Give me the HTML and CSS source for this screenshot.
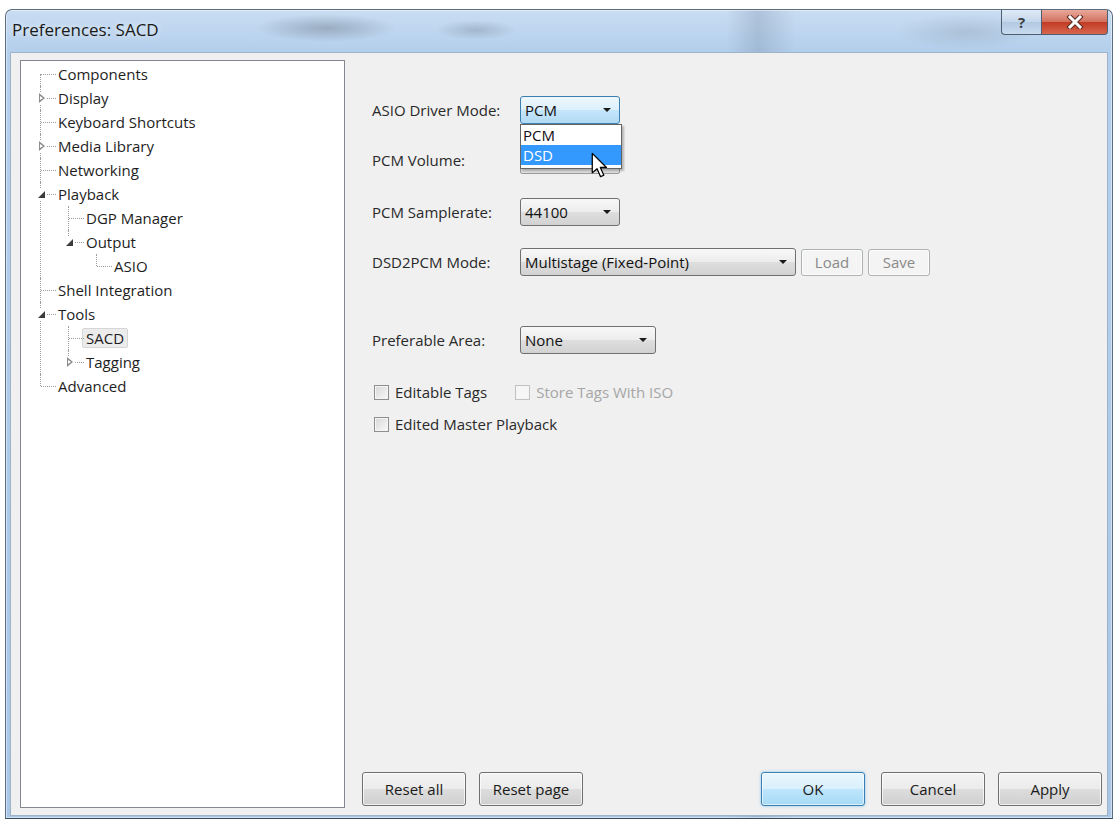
FILE: index.html
```html
<!DOCTYPE html>
<html lang="en">
<head>
    <meta charset="UTF-8">
    <meta name="viewport" content="width=device-width, initial-scale=1.0">
    <title>Preferences: SACD</title>
    <link rel="stylesheet" href="styles.css">
</head>
<body>
    <div class="window">
        <div class="titlebar">
            <span class="title">Preferences: SACD</span>
            <div class="caption">
                <span class="cap-help">?</span>
                <span class="cap-close">
                    <svg width="18" height="14" viewBox="0 0 18 14">
                        <path d="M4 2 L14 12 M14 2 L4 12" stroke="#5a2a22" stroke-width="5" stroke-linecap="square"/>
                        <path d="M4 2 L14 12 M14 2 L4 12" stroke="#fff" stroke-width="3" stroke-linecap="square"/>
                    </svg>
                </span>
            </div>
        </div>

        <div class="client">
            <!-- page tree -->
            <div class="tree">
                <ul>
                    <li><div class="item">Components</div></li>
                    <li><div class="item"><span class="exp closed"></span>Display</div></li>
                    <li><div class="item">Keyboard Shortcuts</div></li>
                    <li><div class="item"><span class="exp closed"></span>Media Library</div></li>
                    <li><div class="item">Networking</div></li>
                    <li>
                        <div class="item"><span class="exp open"></span>Playback</div>
                        <ul>
                            <li><div class="item">DGP Manager</div></li>
                            <li>
                                <div class="item"><span class="exp open"></span>Output</div>
                                <ul>
                                    <li><div class="item">ASIO</div></li>
                                </ul>
                            </li>
                        </ul>
                    </li>
                    <li><div class="item">Shell Integration</div></li>
                    <li>
                        <div class="item"><span class="exp open"></span>Tools</div>
                        <ul>
                            <li><div class="item sel"><span class="label">SACD</span></div></li>
                            <li><div class="item"><span class="exp closed"></span>Tagging</div></li>
                        </ul>
                    </li>
                    <li><div class="item">Advanced</div></li>
                </ul>
            </div>

            <!-- SACD settings page -->
            <div class="page">
                <div class="form">
                    <div class="row">
                        <label>ASIO Driver Mode:</label>
                        <div class="combo focus w100">
                            <span class="value">PCM</span>
                            <span class="arrow"></span>
                            <ul class="droplist">
                                <li>PCM</li>
                                <li class="hot">DSD</li>
                            </ul>
                            <svg class="pointer" width="17" height="26" viewBox="0 0 13.5 20.5">
                                <path d="M1 1 L1 16.5 L4.8 13.2 L7.6 19.5 L10.2 18.4 L7.4 12.2 L12.3 12.2 Z" fill="#fff" stroke="#000" stroke-width="1" stroke-linejoin="round"/>
                            </svg>
                        </div>
                    </div>
                    <div class="row r-volume">
                        <label>PCM Volume:</label>
                        <div class="slider"></div>
                    </div>
                    <div class="row r-rate">
                        <label>PCM Samplerate:</label>
                        <div class="combo w100">
                            <span class="value">44100</span>
                            <span class="arrow"></span>
                        </div>
                    </div>
                    <div class="row r-mode">
                        <label>DSD2PCM Mode:</label>
                        <div class="combo w276">
                            <span class="value">Multistage (Fixed-Point)</span>
                            <span class="arrow"></span>
                        </div>
                        <button class="btn small" disabled>Load</button>
                        <button class="btn small" disabled>Save</button>
                    </div>
                    <div class="row r-area">
                        <label>Preferable Area:</label>
                        <div class="combo w136">
                            <span class="value">None</span>
                            <span class="arrow"></span>
                        </div>
                    </div>
                    <div class="checks">
                        <span class="check"><span class="box"></span>Editable Tags</span>
                        <span class="check off"><span class="box"></span>Store Tags With ISO</span>
                    </div>
                    <div class="checks second">
                        <span class="check"><span class="box"></span>Edited Master Playback</span>
                    </div>
                </div>

                <div class="footer">
                    <button class="btn">Reset all</button>
                    <button class="btn">Reset page</button>
                    <span class="spacer"></span>
                    <button class="btn default">OK</button>
                    <button class="btn">Cancel</button>
                    <button class="btn">Apply</button>
                </div>
            </div>
        </div>
    </div>
</body>
</html>
```

FILE: styles.css
```css
body {
    margin: 0;
    background: #fff;
    font-family: "Open Sans", "Noto Sans", sans-serif;
    font-size: 15px;
    color: #1e1e1e;
    overflow: hidden;
}

/* window frame with aero glass title */
.window {
    margin: 9px 0 0 5px;
    width: 1108px;
    height: 810px;
    box-sizing: border-box;
    border: 1px solid #5b6d80;
    border-bottom-color: #3e4a57;
    border-radius: 7px 7px 0 0;
    display: flex;
    flex-direction: column;
    background:
        radial-gradient(ellipse 70px 14px at 320px 18px, rgba(80, 92, 108, .35), transparent),
        radial-gradient(ellipse 40px 10px at 470px 20px, rgba(80, 92, 108, .25), transparent),
        radial-gradient(ellipse 70px 18px at 960px 22px, rgba(120, 135, 150, .25), transparent),
        linear-gradient(to right, transparent 720px, rgba(110, 130, 155, .28) 752px, transparent 790px),
        linear-gradient(#c9ddf2, #b4cfec 40px, #a9c6e7);
    box-shadow: inset 0 0 0 1px rgba(255, 255, 255, .45);
}
.titlebar {
    height: 42px;
    display: flex;
    align-items: flex-start;
    padding-left: 6px;
}
.title {
    margin-top: 8px;
    font-size: 17px;
    color: #1a1a1a;
    text-shadow: 0 0 6px rgba(255, 255, 255, .9);
}
.caption {
    margin-left: auto;
    margin-right: 4px;
    display: flex;
}
.cap-help,
.cap-close {
    height: 24px;
    display: flex;
    align-items: center;
    justify-content: center;
    border: 1px solid #4e5e70;
    border-top: none;
}
.cap-help {
    width: 39px;
    border-radius: 0 0 0 4px;
    border-right: none;
    background: linear-gradient(#e0ebf6, #c3d6ea 50%, #b2c9e2 51%, #c8dbee);
    font-weight: bold;
    font-size: 15px;
    color: #3a3f46;
}
.cap-close {
    width: 65px;
    border-radius: 0 0 4px 0;
    background: linear-gradient(#e9a89b, #d3725f 48%, #c23c25 52%, #d8664e);
}

.client {
    flex: 1;
    margin: 0 4px 2px 4px;
    display: flex;
    background: #f0f0f0;
    border: 1px solid #9fb3c8;
    padding: 7px 0 7px 9px;
    min-height: 0;
}

/* tree view */
.tree {
    width: 325px;
    box-sizing: border-box;
    background: #fff;
    border: 1px solid #828790;
    padding-top: 1px;
}
.tree ul {
    list-style: none;
    margin: 0;
    padding: 0;
}
.tree ul ul {
    margin-left: 28px;
}
.tree li {
    position: relative;
}
.tree li::before {
    content: '';
    position: absolute;
    left: 19px;
    top: 0;
    bottom: 0;
    border-left: 1px dotted #9c9c9c;
}
.tree li:last-child::before {
    bottom: auto;
    height: 12px;
}
.tree > ul > li:first-child::before {
    top: 12px;
}
.tree > ul > li:last-child::before {
    top: 0;
}
.item {
    position: relative;
    height: 24px;
    line-height: 24px;
    padding-left: 37px;
    white-space: nowrap;
    color: #1e1e1e;
}
.item::before {
    content: '';
    position: absolute;
    left: 20px;
    width: 15px;
    top: 12px;
    border-top: 1px dotted #9c9c9c;
}
.exp {
    position: absolute;
    left: 15px;
    top: 6px;
    width: 11px;
    height: 12px;
    background: #fff;
}
.exp.closed::after {
    content: '';
    position: absolute;
    left: 3px;
    top: 1px;
    border-left: 6px solid #8c8c8c;
    border-top: 5px solid transparent;
    border-bottom: 5px solid transparent;
}
.exp.closed::before {
    content: '';
    position: absolute;
    left: 4px;
    top: 3.5px;
    border-left: 3px solid #fff;
    border-top: 2.5px solid transparent;
    border-bottom: 2.5px solid transparent;
    z-index: 1;
}
.exp.open::after {
    content: '';
    position: absolute;
    left: 2px;
    top: 3px;
    border-right: 7px solid #3c3c3c;
    border-top: 7px solid transparent;
}
.item.sel .label {
    display: inline-block;
    line-height: 18px;
    margin-left: -4px;
    padding: 0 3px;
    background: #ececec;
    border: 1px solid #d6d6d6;
    border-radius: 2px;
}

/* settings page */
.page {
    flex: 1;
    display: flex;
    flex-direction: column;
    padding: 0 5px 0 17px;
}
.form {
    padding: 36px 0 0 10px;
    color: #2a2a2a;
}
.row {
    display: flex;
    align-items: center;
    height: 28px;
}
.row label {
    width: 148px;
    flex: none;
}
.r-volume { margin-top: 22px; }
.r-rate { margin-top: 24px; }
.r-mode { margin-top: 22px; }
.r-area { margin-top: 50px; }

.combo {
    position: relative;
    height: 28px;
    box-sizing: border-box;
    display: flex;
    align-items: center;
    padding-left: 4px;
    border: 1px solid #707070;
    border-radius: 3px;
    background: linear-gradient(#f8f8f8, #ececec 50%, #dedede 51%, #d2d2d2);
    color: #111;
    flex: none;
}
.combo.focus {
    border-color: #3c7fb1;
    background: linear-gradient(#eef7fd, #dcf0fc 50%, #c4e6fb 51%, #b2daf3);
}
.w100 { width: 100px; }
.w136 { width: 136px; }
.w276 { width: 276px; }
.arrow {
    position: absolute;
    right: 8px;
    top: 11px;
    border-left: 4px solid transparent;
    border-right: 4px solid transparent;
    border-top: 4px solid #1a1a1a;
}
.droplist {
    position: absolute;
    top: 27px;
    left: -1px;
    width: 102px;
    box-sizing: border-box;
    margin: 0;
    padding: 0 0 3px;
    list-style: none;
    background: #fff;
    border: 1px solid #646464;
    box-shadow: 2px 2px 2px rgba(0, 0, 0, .25);
    z-index: 2;
}
.droplist li {
    height: 20px;
    line-height: 20px;
    padding-left: 2px;
}
.droplist li.hot {
    background: #3399ff;
    color: #fff;
}
.pointer {
    position: absolute;
    left: 70px;
    top: 55px;
    z-index: 3;
}
.slider {
    width: 100px;
    height: 28px;
    box-sizing: border-box;
    background: linear-gradient(#f6f6f6, #dedede);
    border: 1px solid #9a9a9a;
    border-radius: 2px;
}

.checks {
    display: flex;
    align-items: center;
    height: 20px;
    margin-top: 28px;
    padding-left: 2px;
}
.checks.second {
    margin-top: 12px;
}
.check {
    display: flex;
    align-items: center;
    margin-right: 28px;
}
.check .box {
    width: 13px;
    height: 13px;
    margin-right: 6px;
    border: 1px solid #8e8f8f;
    background: linear-gradient(135deg, #d6d6d6, #fafafa);
    box-shadow: inset 0 0 0 1px #f4f4f4;
}
.check.off {
    color: #a6a6a6;
}
.check.off .box {
    border-color: #c2c2c2;
    background: #f6f6f6;
}

/* buttons */
.btn {
    width: 104px;
    height: 34px;
    padding: 0;
    font-family: inherit;
    font-size: 15px;
    color: #1a1a1a;
    border: 1px solid #707070;
    border-radius: 3px;
    background: linear-gradient(#f4f4f4, #ebebeb 50%, #dddddd 51%, #cfcfcf);
    box-shadow: inset 0 0 0 1px rgba(255, 255, 255, .7);
}
.btn.small {
    width: 62px;
    height: 27px;
    margin-left: 5px;
}
.btn[disabled] {
    color: #8a8a8a;
    border-color: #adb2b5;
    background: #f4f4f4;
}
.btn.default {
    border-color: #3c7fb1;
    background: linear-gradient(#eaf6fd, #d9f0fc 50%, #bee6fd 51%, #a7d9f5);
    box-shadow: inset 0 0 0 1px rgba(255, 255, 255, .6), 0 0 3px #7fc4ee;
}
.footer {
    margin-top: auto;
    margin-bottom: 2px;
    display: flex;
}
.footer .btn + .btn {
    margin-left: 13px;
}
.footer .spacer {
    flex: 1;
}
.footer .spacer + .btn {
    margin-left: 0;
}
.footer .default + .btn {
    margin-left: 16px;
}
```
